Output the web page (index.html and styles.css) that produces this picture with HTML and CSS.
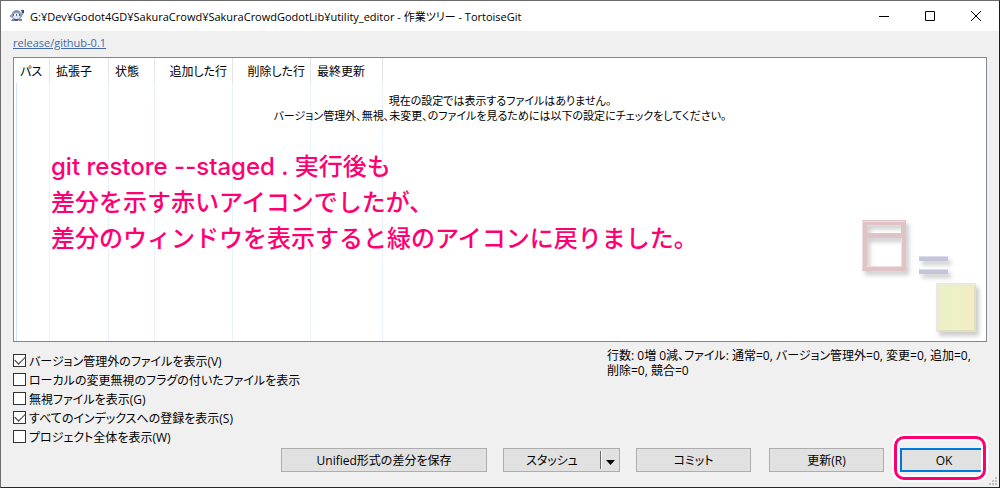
FILE: index.html
```html
<!DOCTYPE html>
<html lang="ja">
<head>
  <meta charset="UTF-8" />
  <meta name="viewport" content="width=device-width, initial-scale=1.0"/>
  <title>utility_editor - 作業ツリー - TortoiseGit</title>
  <link rel="stylesheet" href="styles.css">
</head>
<body>
  <div class="window">
    <header class="titlebar">
      <svg class="app-icon" width="16" height="14" viewBox="0 0 16 14">
        <path d="M1 6 L4 5 L4 9 L1 8z M11 6 L14 2 L15 4 L12 9z" fill="#9aa4ba"/>
        <path d="M3 10 L7 9 L6 12 L2 12z M9 9 L13 10 L13 12 L10 12z" fill="#7c879f"/>
        <ellipse cx="7.5" cy="6" rx="4.8" ry="5" fill="#8995b3"/>
        <ellipse cx="7.5" cy="7" rx="3.5" ry="3" fill="#dce5f3"/>
        <path d="M4 5h7v2H4z" fill="#526690"/>
        <path d="M5 5h2v2H5z M8 5h2v2H8z" fill="#edf3ff"/>
        <path d="M5 10h5l-1 2H6z" fill="#4f5b77"/>
        <path d="M12 1h3v3h-2z" fill="#2d566c"/>
      </svg>
      <h1>G:¥Dev¥Godot4GD¥SakuraCrowd¥SakuraCrowdGodotLib¥utility_editor - 作業ツリー - TortoiseGit</h1>
      <div class="window-buttons">
        <button type="button" aria-label="最小化">
          <svg width="10" height="10"><path d="M0 5.5h10"/></svg>
        </button>
        <button type="button" aria-label="最大化">
          <svg width="10" height="10"><path d="M.5 .5h9v9h-9z"/></svg>
        </button>
        <button type="button" aria-label="閉じる">
          <svg width="10" height="10"><path d="M0 0L10 10M10 0L0 10"/></svg>
        </button>
      </div>
    </header>

    <main class="content">
      <a class="branch" href="#">release/github-0.1</a>

      <div class="file-list">
        <table>
          <thead>
            <tr>
              <th class="col-path">パス</th>
              <th class="col-ext">拡張子</th>
              <th class="col-status">状態</th>
              <th class="col-lines">追加した行</th>
              <th class="col-lines">削除した行</th>
              <th class="col-date">最終更新</th>
              <th></th>
            </tr>
          </thead>
          <tbody>
            <tr><td></td><td></td><td></td><td></td><td></td><td></td><td></td></tr>
          </tbody>
        </table>

        <p class="empty">現在の設定では表示するファイルはありません。<br>
          バージョン管理外、無視、未変更、のファイルを見るためには以下の設定にチェックをしてください。</p>

        <p class="note">git restore --staged . 実行後も<br>差分を示す赤いアイコンでしたが、<br>差分のウィンドウを表示すると緑のアイコンに戻りました。</p>

        <svg class="watermark" width="124" height="124" viewBox="0 0 124 124">
          <defs>
            <filter id="shadow" x="-20%" y="-50%" width="150%" height="250%">
              <feDropShadow dx="3" dy="4" stdDeviation="2" flood-color="#000" flood-opacity="0.2"/>
            </filter>
            <linearGradient id="yellow">
              <stop offset="0" stop-color="#eaf0c6"/>
              <stop offset="0.6" stop-color="#eff0c5"/>
              <stop offset="1" stop-color="#f3eac3"/>
            </linearGradient>
          </defs>
          <path filter="url(#shadow)" fill="#e0c3c7" fill-rule="evenodd" d="M2 0h44v51H2z M7 5v8h34V5z M7 18v28h34V18z"/>
          <path fill="none" stroke="#eedfe1" d="M2.500 50V1.500H45 M6.500 46.500H41.500V18"/>
          <g filter="url(#shadow)" fill="#c4c4db">
            <path d="M59 36h29v5H59z"/>
            <path d="M59 49h29v5H59z"/>
          </g>
          <path stroke="#dedeea" d="M59 36.500h29M59 49.500h29"/>
          <path filter="url(#shadow)" fill="url(#yellow)" d="M76 63h40v49H76z"/>
          <path fill="none" stroke="#e9e9dd" stroke-width="3" d="M77.500 111V64.500H115"/>
          <path fill="none" stroke="#e0dfc0" stroke-width="2" d="M78 111H115V66"/>
        </svg>
      </div>

      <div class="options">
        <div class="checks">
          <label><input type="checkbox" checked>バージョン管理外のファイルを表示(V)</label>
          <label><input type="checkbox">ローカルの変更無視のフラグの付いたファイルを表示</label>
          <label><input type="checkbox">無視ファイルを表示(G)</label>
          <label><input type="checkbox" checked>すべてのインデックスへの登録を表示(S)</label>
          <label><input type="checkbox">プロジェクト全体を表示(W)</label>
        </div>
        <p class="stats">行数: 0増 0減、ファイル: 通常=0, バージョン管理外=0, 変更=0, 追加=0, 削除=0, 競合=0</p>
      </div>

      <div class="actions">
        <button type="button" class="btn save">Unified形式の差分を保存</button>
        <div class="split">
          <button type="button" class="stash">スタッシュ</button>
          <button type="button" class="arrow" aria-label="スタッシュのメニュー">
            <svg width="9" height="5"><path d="M0 0h9L4.500 5z"/></svg>
          </button>
        </div>
        <button type="button" class="btn commit">コミット</button>
        <button type="button" class="btn refresh">更新(R)</button>
        <div class="ok-mark">
          <button type="button" class="btn ok">OK</button>
        </div>
      </div>
    </main>

    <svg class="grip" width="8" height="8">
      <path d="M6 0h2v2H6z M3 3h2v2H3z M6 3h2v2H6z M0 6h2v2H0z M3 6h2v2H3z M6 6h2v2H6z" fill="#bfbfbf"/>
    </svg>
  </div>
</body>
</html>
```
FILE: styles.css
```css
* {
  box-sizing: border-box;
}

body {
  margin: 0;
  font-family: "Open Sans", "Noto Sans CJK JP", sans-serif;
  font-size: 12px;
  font-feature-settings: "palt";
  color: #000;
}

p, h1 {
  margin: 0;
}

button {
  font: inherit;
  font-feature-settings: inherit;
  color: inherit;
  padding: 0;
}

.window {
  position: relative;
  display: flex;
  flex-direction: column;
  min-height: 100vh;
  background: #f0f0f0;
  border: 1px solid #6b6b6b;
  border-right-color: #1c1c1c;
  border-bottom-color: #24282c;
}

/* title bar */
.titlebar {
  display: flex;
  align-items: center;
  height: 30px;
  padding-left: 8px;
  background: #fff;
}

.app-icon {
  margin-right: 5px;
}

.titlebar h1 {
  flex: 1;
  font-size: 11px;
  font-weight: normal;
  white-space: nowrap;
}

.window-buttons {
  display: flex;
}

.window-buttons button {
  display: flex;
  align-items: center;
  justify-content: center;
  width: 46px;
  height: 30px;
  border: none;
  background: none;
}

.window-buttons svg {
  fill: none;
  stroke: #000;
}

/* main area */
.content {
  flex: 1;
  display: flex;
  flex-direction: column;
  padding: 4px 12px 14px;
}

.branch {
  align-self: flex-start;
  font-size: 11px;
  line-height: 16px;
  margin-bottom: 6px;
  color: #4668a8;
}

.file-list {
  flex: 1;
  display: flex;
  position: relative;
  min-height: 240px;
  background: #fff;
  border: 1px solid #828790;
}

table {
  width: 100%;
  table-layout: fixed;
  border-collapse: separate;
  border-spacing: 0;
}

th {
  height: 25px;
  padding: 0 5px 0 6px;
  font-weight: normal;
  text-align: left;
  white-space: nowrap;
  border-right: 1px solid #e5e5e5;
}

td {
  padding: 0;
  border-right: 1px solid #e8f1fc;
}

th:last-child,
td:last-child {
  border-right: none;
}

td:first-child {
  background: linear-gradient(#cfe5fb, #cfe5fb) 2px 0 / 1px 100% no-repeat;
}

.col-path { width: 36px; }
.col-ext { width: 59px; }
.col-status { width: 46px; }
.col-lines { width: 78px; text-align: right; }
.col-date { width: 72px; }

.empty {
  position: absolute;
  top: 35px;
  left: 0;
  right: 0;
  font-size: 11px;
  line-height: 15px;
  text-align: center;
}

.note {
  position: absolute;
  top: 91px;
  left: 37px;
  font-family: Inter, "Noto Sans CJK JP", sans-serif;
  font-size: 24px;
  font-weight: 500;
  font-feature-settings: normal;
  line-height: 36px;
  color: #ff0073;
  text-shadow: 0 0 2px #fff;
  white-space: nowrap;
}

.watermark {
  position: absolute;
  right: 2px;
  bottom: -3px;
}

/* check boxes and totals */
.options {
  display: flex;
  justify-content: space-between;
  align-items: flex-start;
  padding-top: 6px;
}

.checks {
  padding: 3px 0 1px;
}

.checks label {
  display: flex;
  align-items: center;
  height: 19px;
}

.checks input {
  appearance: none;
  width: 13px;
  height: 13px;
  margin: 0 3px 0 0;
  background: #fff;
  border: 1px solid #333;
}

.checks input:checked::before {
  content: "";
  display: block;
  width: 9px;
  height: 5px;
  margin: 1px;
  border: solid #333;
  border-width: 0 0 1px 1px;
  transform: rotate(-45deg);
}

.stats {
  width: 380px;
  padding-right: 8px;
  line-height: 15px;
}

/* buttons */
.actions {
  display: flex;
  justify-content: flex-end;
  align-items: center;
  height: 26px;
}

.btn,
.split {
  height: 24px;
  background: #e1e1e1;
  border: 1px solid #adadad;
}

.save {
  width: 206px;
  margin-right: 16px;
}

.split {
  display: flex;
  align-items: center;
  width: 117px;
  margin-right: 16px;
}

.split button {
  height: 18px;
  border: none;
  background: none;
}

.split .stash {
  flex: 1;
  border-right: 1px solid #696969;
}

.split .arrow {
  width: 18px;
  border-left: 1px solid #fff;
}

.commit {
  width: 115px;
  margin-right: 18px;
}

.refresh {
  width: 115px;
  margin-right: 16px;
}

.ok-mark {
  position: relative;
  width: 82px;
  margin-right: 5px;
}

.ok-mark::after {
  content: "";
  position: absolute;
  inset: -12px -4px -8px -6px;
  border: 3px solid #ff0073;
  border-radius: 10px;
  box-shadow: 0 0 0 2px #fff, inset 0 0 0 2px #fff;
  pointer-events: none;
}

/* runs under the mark on the right, so no edge there */
.ok {
  width: 100%;
  padding-left: 4px;
  border: 2px solid #0078d7;
  border-right: none;
}

.grip {
  position: absolute;
  right: 2px;
  bottom: 2px;
}
```
